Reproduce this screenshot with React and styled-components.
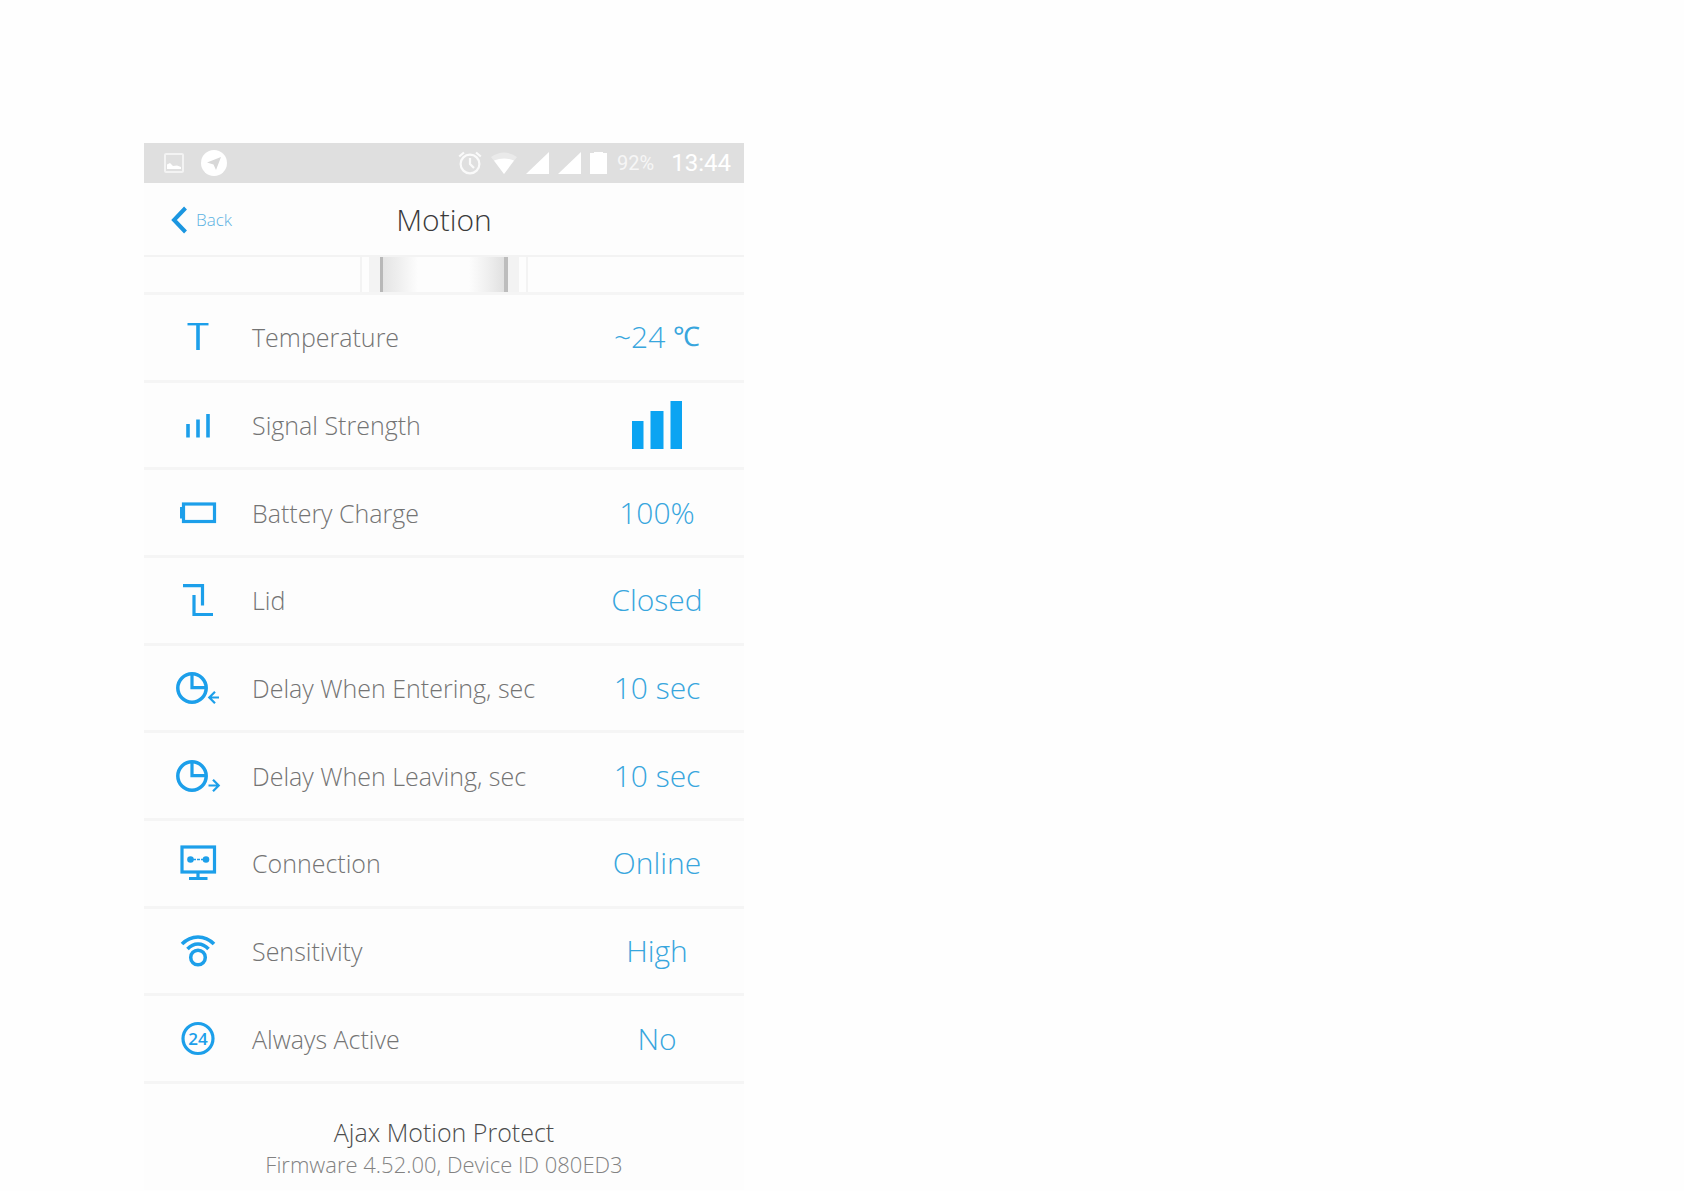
import React from "react";
import styled, { createGlobalStyle } from "styled-components";

const GlobalStyle = createGlobalStyle`
  *, *::before, *::after { box-sizing: border-box; }
  body {
    margin: 0;
    background: #fefefe;
    font-family: "Open Sans", "Noto Sans", sans-serif;
    font-weight: 300;
  }
`;

const Page = styled.main`
  padding: 143px 24px 0 144px;
`;

const Phone = styled.section`
  width: 100%;
  max-width: 600px;
  background: #fdfdfd;
`;

const StatusBar = styled.div`
  display: flex;
  align-items: center;
  justify-content: space-between;
  height: 40px;
  padding: 0 13px 0 20px;
  background: #dfdfdf;
  color: #fff;
  font-family: Roboto, sans-serif;
  font-weight: 400;
`;

const StatusGroup = styled.div`
  display: flex;
  align-items: center;
  gap: ${(p) => p.$gap}px;
`;

const BatteryLevel = styled.span`
  margin: 0 8px 0 1px;
  color: #f6f6f6;
  font-size: 20px;
  line-height: 24px;
`;

const Clock = styled.time`
  font-size: 24px;
  line-height: 24px;
`;

const Header = styled.header`
  display: grid;
  grid-template-columns: 1fr auto 1fr;
  align-items: center;
  height: 74px;
  padding: 2px 27px 0;
  border-bottom: 2px solid #f3f3f3;
`;

const BackButton = styled.button`
  display: flex;
  align-items: center;
  justify-self: start;
  gap: 9px;
  padding: 0;
  border: 0;
  background: none;
  color: #5bb2e2;
  font: inherit;
  font-size: 17px;
  line-height: 24px;
  cursor: pointer;
`;

const Title = styled.h1`
  margin: 0;
  color: #3a3a3a;
  font-size: 30px;
  line-height: 40px;
  font-weight: 300;
`;

const Preview = styled.div`
  display: flex;
  justify-content: center;
  border-bottom: 3px solid #f5f5f5;

  svg { display: block; }
`;

const Settings = styled.dl`
  display: grid;
  grid-auto-rows: 1fr;
  min-height: 789px;
  margin: 0;
`;

const Row = styled.div`
  display: grid;
  grid-template-columns: 108px 1fr 174px;
  align-items: center;
  border-bottom: 3px solid #f5f5f5;
`;

const IconCell = styled.span`
  display: flex;
  justify-content: center;
`;

const Label = styled.dt`
  color: #747474;
  font-size: 25px;
  line-height: 32px;
`;

const Value = styled.dd`
  display: flex;
  justify-content: center;
  margin: 0;
  color: #38a6dd;
  font-size: 30px;
  line-height: 40px;
  white-space: pre;
`;

const Unit = styled.span`
  font-family: Roboto, sans-serif;
  font-size: 27px;
  font-weight: 400;
`;

const Footer = styled.footer`
  display: flex;
  flex-direction: column;
  align-items: center;
  padding: 32px 16px 10px;
`;

const DeviceName = styled.p`
  margin: 0;
  color: #4c4c4c;
  font-size: 25px;
  line-height: 32px;
`;

const DeviceInfo = styled.p`
  margin: 0;
  color: #828282;
  font-size: 22px;
  line-height: 32px;
`;

const IconSvg = styled.svg`
  width: 48px;
  height: 48px;
  fill: none;
  stroke: #1c9fea;
  stroke-width: 3.2;
`;

const Icon = ({ children }) => (
  <IconCell>
    <IconSvg viewBox="0 0 48 48" aria-hidden="true">{children}</IconSvg>
  </IconCell>
);

const TemperatureIcon = () => (
  <Icon>
    <path d="M13.5 11.2H34.5" strokeWidth="2.4" />
    <path d="M24 11V37" strokeWidth="3.6" />
  </Icon>
);

const SignalIcon = () => (
  <Icon>
    <path d="M14 23V36.500M24 18.500V36.500M34 13V36.500" strokeWidth="3.6" />
  </Icon>
);

const BatteryIcon = () => (
  <Icon>
    <rect x="9.500" y="15" width="31" height="17.500" />
    <path d="M7.600 18V29.500" />
  </Icon>
);

const LidIcon = () => (
  <Icon>
    <path d="M9 9.700H28.500V29.500" />
    <path d="M20 19V38.500H39" />
  </Icon>
);

const DelayIcon = ({ leaving }) => (
  <Icon>
    <circle cx="18" cy="24" r="14.200" strokeWidth="3.5" />
    <path d="M18 10V23.700H32" />
    <path
      d={leaving ? "M34.500 33.500H44.500M39 27.800L44.700 33.500L39 39.200" : "M45 33.500H35.500M41 27.800L35.300 33.500L41 39.200"}
      strokeWidth="2.2"
    />
  </Icon>
);

const ConnectionIcon = () => (
  <Icon>
    <rect x="8" y="8" width="32.500" height="25" />
    <path d="M24 33V39M15 39.500H33.500" />
    <path d="M19 20.500H29" strokeWidth="1.300" strokeDasharray="3 1" />
    <circle cx="16.500" cy="20.500" r="3.300" fill="#1c9fea" stroke="none" />
    <circle cx="32" cy="20.500" r="3.300" fill="#1c9fea" stroke="none" />
  </Icon>
);

const SensitivityIcon = () => (
  <Icon>
    <circle cx="24" cy="30.500" r="7.300" strokeWidth="3.5" />
    <path d="M8 17C17 7.500 31 7.500 40 17" strokeWidth="3.5" />
    <path d="M13.500 22C19.500 15.200 28.500 15.200 34.500 22" strokeWidth="3.5" />
  </Icon>
);

const AlwaysIcon = () => (
  <Icon>
    <circle cx="24" cy="23.500" r="15" />
    <text x="24" y="29.500" textAnchor="middle" fontSize="17" fontWeight="600" fill="#1c9fea" stroke="none">24</text>
  </Icon>
);

const SignalBars = () => (
  <svg width="50" height="50" viewBox="0 0 50 50" fill="#0ba4f2" role="img" aria-label="Strong signal">
    <rect x="0" y="21" width="11.500" height="28" />
    <rect x="18.500" y="11" width="13" height="38" />
    <rect x="38.500" y="1" width="11.500" height="48" />
  </svg>
);

const DevicePreview = () => (
  <svg width="168" height="35" viewBox="0 0 168 35" aria-hidden="true">
    <defs>
      <linearGradient id="body">
        <stop offset="0" stopColor="#e2e2e2" />
        <stop offset="0.15" stopColor="#efefef" />
        <stop offset="0.3" stopColor="#fdfdfd" />
        <stop offset="0.7" stopColor="#fdfdfd" />
        <stop offset="0.85" stopColor="#efefef" />
        <stop offset="1" stopColor="#dedede" />
      </linearGradient>
    </defs>
    <rect x="0" width="2" height="35" fill="#f3f3f3" />
    <rect x="9" width="11" height="35" fill="#f3f3f3" />
    <rect x="20" width="127" height="35" fill="url(#body)" />
    <rect x="20" width="3" height="35" fill="#b8b8b8" />
    <rect x="144" width="4" height="35" fill="#bdbdbd" />
    <rect x="148" width="11" height="35" fill="#f3f3f3" />
    <rect x="166" width="2" height="35" fill="#f3f3f3" />
  </svg>
);

const PictureIcon = () => (
  <svg width="20" height="20" viewBox="0 0 20 20" aria-hidden="true">
    <rect x="1" y="1" width="18" height="18" rx="1" fill="none" stroke="#f3f3f3" strokeWidth="2" />
    <path d="M3 16V11.500L6 10L9 13L13 12.500L17 14V16Z" fill="#fff" />
  </svg>
);

const TelegramIcon = () => (
  <svg width="26" height="26" viewBox="0 0 26 26" aria-hidden="true">
    <circle cx="13" cy="13" r="13" fill="#fff" />
    <path d="M6 12.500L20 7L15 20L12.500 14.500Z" fill="#d8d8d8" />
  </svg>
);

const BatteryStatusIcon = () => (
  <svg width="17" height="22" viewBox="0 0 17 22" fill="#fff" aria-hidden="true">
    <path d="M0 1H4V0H13V1H17V22H0Z" />
  </svg>
);

const AlarmIcon = () => (
  <svg width="24" height="24" viewBox="0 0 24 24" fill="none" stroke="#fafafa" strokeWidth="2.200" aria-hidden="true">
    <circle cx="12" cy="13" r="9.400" />
    <path d="M12 7V13L16 17M1.200 5.500L6 1.500M18 1.500L22.800 5.500" />
  </svg>
);

const WifiIcon = () => (
  <svg width="26" height="22" viewBox="0 0 26 22" fill="#fff" aria-hidden="true">
    <path d="M0 5Q13 -4 26 5L13 22Z" fillOpacity="0.35" />
    <path d="M3 8.500Q13 4.500 23 8.500L13 22Z" />
  </svg>
);

const CellIcon = () => (
  <svg width="23" height="22" viewBox="0 0 23 22" fill="#fff" aria-hidden="true">
    <path d="M0 22H23V0Z" />
  </svg>
);

const ROWS = [
  { label: "Temperature", icon: <TemperatureIcon />, value: <>~24 <Unit>℃</Unit></> },
  { label: "Signal Strength", icon: <SignalIcon />, value: <SignalBars /> },
  { label: "Battery Charge", icon: <BatteryIcon />, value: "100%" },
  { label: "Lid", icon: <LidIcon />, value: "Closed" },
  { label: "Delay When Entering, sec", icon: <DelayIcon />, value: "10 sec" },
  { label: "Delay When Leaving, sec", icon: <DelayIcon leaving />, value: "10 sec" },
  { label: "Connection", icon: <ConnectionIcon />, value: "Online" },
  { label: "Sensitivity", icon: <SensitivityIcon />, value: "High" },
  { label: "Always Active", icon: <AlwaysIcon />, value: "No" },
];

export default function App() {
  return (
    <>
      <GlobalStyle />
      <Page>
        <Phone>
          <StatusBar>
            <StatusGroup $gap={17}>
              <PictureIcon />
              <TelegramIcon />
            </StatusGroup>
            <StatusGroup $gap={9}>
              <AlarmIcon />
              <WifiIcon />
              <CellIcon />
              <CellIcon />
              <BatteryStatusIcon />
              <BatteryLevel>92%</BatteryLevel>
              <Clock>13:44</Clock>
            </StatusGroup>
          </StatusBar>
          <Header>
            <BackButton type="button">
              <svg width="16" height="28" viewBox="0 0 16 28" fill="none" stroke="#1b96e0" strokeWidth="4" aria-hidden="true">
                <path d="M14.500 2L3 14L14.500 26" />
              </svg>
              Back
            </BackButton>
            <Title>Motion</Title>
          </Header>
          <Preview>
            <DevicePreview />
          </Preview>
          <Settings>
            {ROWS.map((row) => (
              <Row key={row.label}>
                {row.icon}
                <Label>{row.label}</Label>
                <Value>{row.value}</Value>
              </Row>
            ))}
          </Settings>
          <Footer>
            <DeviceName>Ajax Motion Protect</DeviceName>
            <DeviceInfo>Firmware 4.52.00, Device ID 080ED3</DeviceInfo>
          </Footer>
        </Phone>
      </Page>
    </>
  );
}
